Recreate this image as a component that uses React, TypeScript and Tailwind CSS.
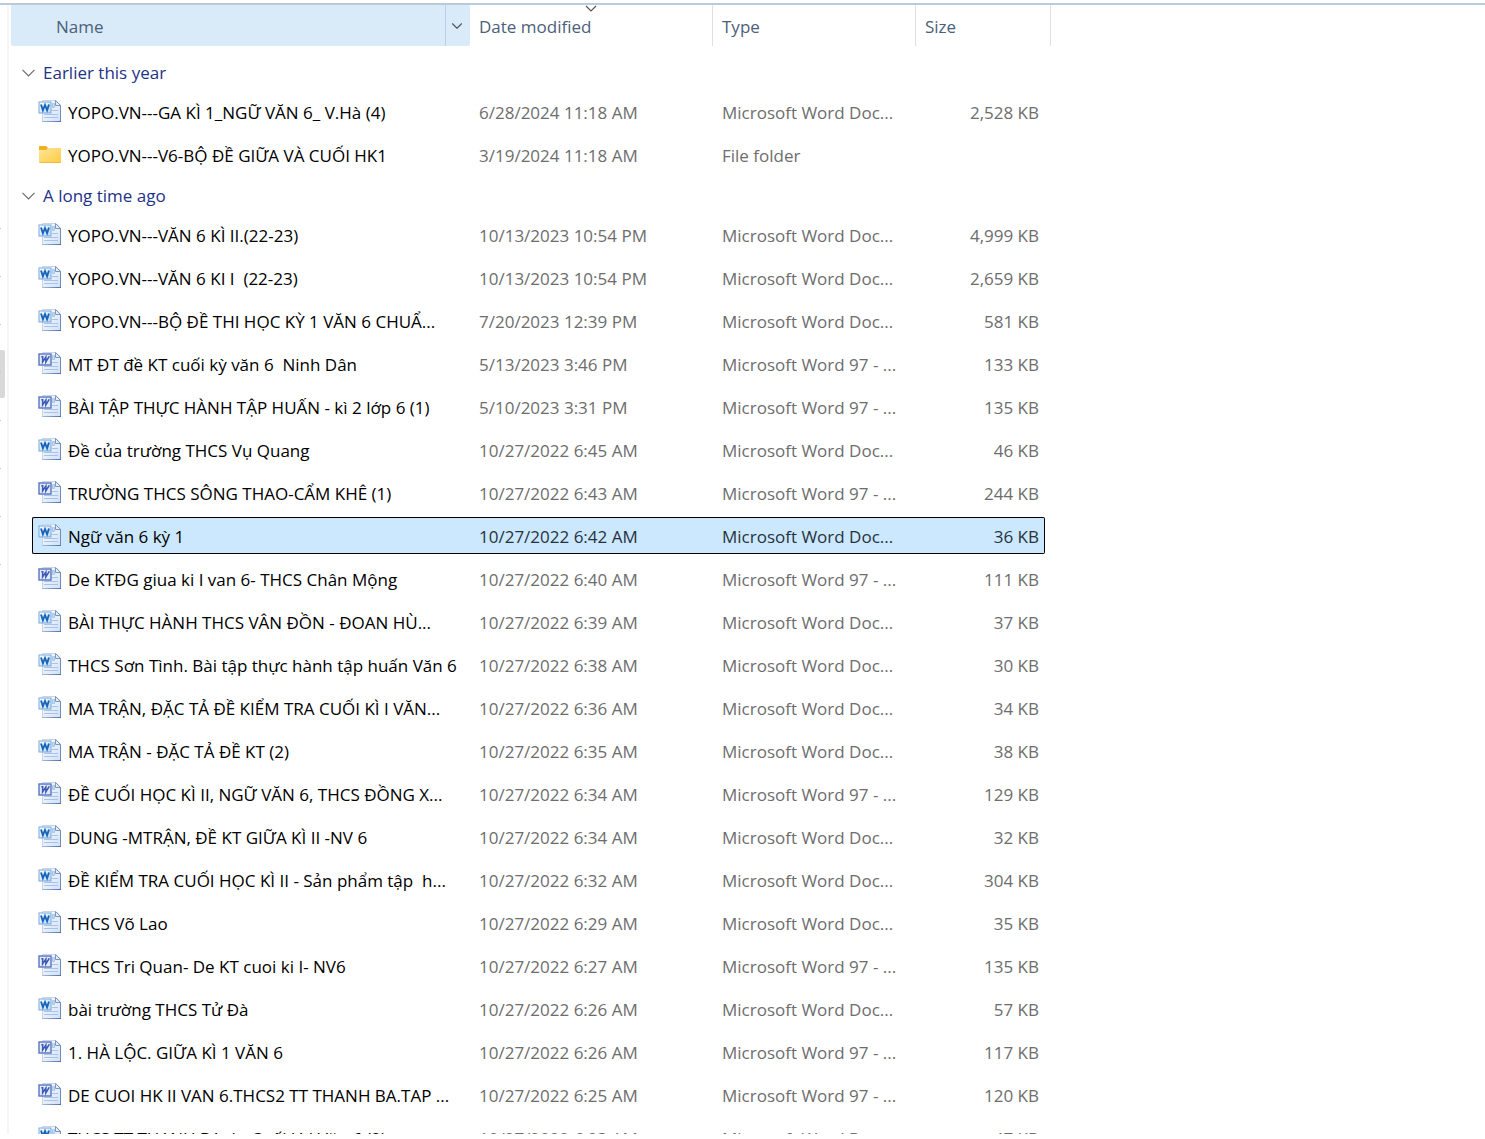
import { ChevronDown } from 'lucide-react'

type Kind = 'docx' | 'doc' | 'folder'

interface FileItem {
  name: string
  date: string
  kind: Kind
  size: string
  selected?: boolean
}

interface Group {
  label: string
  files: FileItem[]
}

const typeLabels: Record<Kind, string> = {
  docx: 'Microsoft Word Doc...',
  doc: 'Microsoft Word 97 - ...',
  folder: 'File folder',
}

const groups: Group[] = [
  {
    label: 'Earlier this year',
    files: [
      { name: 'YOPO.VN---GA KÌ 1_NGỮ VĂN 6_ V.Hà (4)', date: '6/28/2024 11:18 AM', kind: 'docx', size: '2,528 KB' },
      { name: 'YOPO.VN---V6-BỘ ĐỀ GIỮA VÀ CUỐI HK1', date: '3/19/2024 11:18 AM', kind: 'folder', size: '' },
    ],
  },
  {
    label: 'A long time ago',
    files: [
      { name: 'YOPO.VN---VĂN 6 KÌ II.(22-23)', date: '10/13/2023 10:54 PM', kind: 'docx', size: '4,999 KB' },
      { name: 'YOPO.VN---VĂN 6 KI I  (22-23)', date: '10/13/2023 10:54 PM', kind: 'docx', size: '2,659 KB' },
      { name: 'YOPO.VN---BỘ ĐỀ THI HỌC KỲ 1 VĂN 6 CHUẨ...', date: '7/20/2023 12:39 PM', kind: 'docx', size: '581 KB' },
      { name: 'MT ĐT đề KT cuối kỳ văn 6  Ninh Dân', date: '5/13/2023 3:46 PM', kind: 'doc', size: '133 KB' },
      { name: 'BÀI TẬP THỰC HÀNH TẬP HUẤN - kì 2 lớp 6 (1)', date: '5/10/2023 3:31 PM', kind: 'doc', size: '135 KB' },
      { name: 'Đề của trường THCS Vụ Quang', date: '10/27/2022 6:45 AM', kind: 'docx', size: '46 KB' },
      { name: 'TRƯỜNG THCS SÔNG THAO-CẨM KHÊ (1)', date: '10/27/2022 6:43 AM', kind: 'doc', size: '244 KB' },
      { name: 'Ngữ văn 6 kỳ 1', date: '10/27/2022 6:42 AM', kind: 'docx', size: '36 KB', selected: true },
      { name: 'De KTĐG giua ki I van 6- THCS Chân Mộng', date: '10/27/2022 6:40 AM', kind: 'doc', size: '111 KB' },
      { name: 'BÀI THỰC HÀNH THCS VÂN ĐỒN - ĐOAN HÙ...', date: '10/27/2022 6:39 AM', kind: 'docx', size: '37 KB' },
      { name: 'THCS Sơn Tình. Bài tập thực hành tập huấn Văn 6', date: '10/27/2022 6:38 AM', kind: 'docx', size: '30 KB' },
      { name: 'MA TRẬN, ĐẶC TẢ ĐỀ KIỂM TRA CUỐI KÌ I VĂN...', date: '10/27/2022 6:36 AM', kind: 'docx', size: '34 KB' },
      { name: 'MA TRẬN - ĐẶC TẢ ĐỀ KT (2)', date: '10/27/2022 6:35 AM', kind: 'docx', size: '38 KB' },
      { name: 'ĐỀ CUỐI HỌC KÌ II, NGỮ VĂN 6, THCS ĐỒNG X...', date: '10/27/2022 6:34 AM', kind: 'doc', size: '129 KB' },
      { name: 'DUNG -MTRẬN, ĐỀ KT GIỮA KÌ II -NV 6', date: '10/27/2022 6:34 AM', kind: 'docx', size: '32 KB' },
      { name: 'ĐỀ KIỂM TRA CUỐI HỌC KÌ II - Sản phẩm tập  h...', date: '10/27/2022 6:32 AM', kind: 'docx', size: '304 KB' },
      { name: 'THCS Võ Lao', date: '10/27/2022 6:29 AM', kind: 'docx', size: '35 KB' },
      { name: 'THCS Tri Quan- De KT cuoi ki I- NV6', date: '10/27/2022 6:27 AM', kind: 'doc', size: '135 KB' },
      { name: 'bài trường THCS Tử Đà', date: '10/27/2022 6:26 AM', kind: 'docx', size: '57 KB' },
      { name: '1. HÀ LỘC. GIỮA KÌ 1 VĂN 6', date: '10/27/2022 6:26 AM', kind: 'doc', size: '117 KB' },
      { name: 'DE CUOI HK II VAN 6.THCS2 TT THANH BA.TAP ...', date: '10/27/2022 6:25 AM', kind: 'doc', size: '120 KB' },
      { name: 'THCS TT THANH BA- kt Cuối kì I Văn 6 (2)', date: '10/27/2022 6:23 AM', kind: 'docx', size: '47 KB' },
    ],
  },
]

const navItems = [0, 1, 2, 3, 4, 5, 6, 7]

function WordIcon({ legacy }: { legacy: boolean }) {
  return (
    <svg width="24" height="24" viewBox="0 0 24 24" className="shrink-0" aria-hidden="true">
      <defs>
        <linearGradient id="page" x1="0" y1="0" x2="1" y2="1">
          <stop offset="0" stopColor="#ffffff" />
          <stop offset="1" stopColor="#cfe0f8" />
        </linearGradient>
        <linearGradient id="badge" x1="0" y1="0" x2="1" y2="1">
          <stop offset="0" stopColor="#ffffff" />
          <stop offset="1" stopColor="#b9d8f7" />
        </linearGradient>
        <linearGradient id="edge" x1="0" y1="0" x2="1" y2="0">
          <stop offset="0" stopColor="#a9bddb" />
          <stop offset="1" stopColor="#4d6fa8" />
        </linearGradient>
      </defs>
      <path d="M4.500 0.500H18L22.500 5V21.500H4.500Z" fill="url(#page)" stroke="#c9d5e6" />
      <path d="M22.500 5V22" fill="none" stroke="#6d8cbd" />
      <path d="M4 21H23V22H4Z" fill="url(#edge)" />
      <path d="M17.500 0.500V5.500H22.500Z" fill="#e4edf8" stroke="#7d97bd" />
      <path d="M14.500 3.500H16.500V7.500H14.500Z" fill="#c4dbf5" stroke="#a9c6e8" />
      <path d="M14 10.500H20M6 14.500H20M6 17.500H20" stroke="#a9c3e8" />
      <rect
        x="1"
        y="2"
        width="12"
        height="11"
        fill={legacy ? '#e3eaf9' : 'url(#badge)'}
        stroke={legacy ? '#5874c4' : '#79a7dc'}
        strokeWidth={legacy ? 1.4 : 1}
      />
      {legacy ? (
        <path d="M3.300 4.800H5.500M4.700 4.800L4.600 10L7.900 5L7.800 10L11 4.800H11.600" fill="none" stroke="#3d5cb5" strokeWidth="1.500" />
      ) : (
        <path d="M3 4.500L4.900 10.300L7 5L9.100 10.300L11 4.500" fill="none" stroke="#1765bb" strokeWidth="1.900" />
      )}
    </svg>
  )
}

function FolderIcon() {
  return (
    <svg width="24" height="24" viewBox="0 0 24 24" className="shrink-0" aria-hidden="true">
      <defs>
        <linearGradient id="folder" x1="0" y1="0" x2="1" y2="1">
          <stop offset="0" stopColor="#ffe69c" />
          <stop offset="1" stopColor="#ffcb40" />
        </linearGradient>
      </defs>
      <path d="M1 4Q1 3 2 3H8L10 5H22Q23 5 23 6V10H1Z" fill="#efb01f" />
      <path d="M1 7H8L10 5H23V19Q23 20 22 20H2Q1 20 1 19Z" fill="url(#folder)" />
      <path d="M1.500 19.500H22.500" stroke="#eebc3b" />
    </svg>
  )
}

function FileRow({ file }: { file: FileItem }) {
  const cell = file.selected
    ? 'flex h-[37px] items-center border-y border-black bg-[#cce8ff] text-[#26323c]'
    : 'flex h-[37px] items-center border-y border-transparent text-[#6d6d6d]'
  return (
    <tr className="h-[43px]" aria-selected={file.selected}>
      <td className="pt-0.5 pb-1 pl-[21px]">
        <div className={`${cell} gap-1.5 pl-[5px] ${file.selected ? 'rounded-l-xs border-l' : 'border-l'}`}>
          {file.kind === 'folder' ? <FolderIcon /> : <WordIcon legacy={file.kind === 'doc'} />}
          <span className="pt-0.5 whitespace-pre text-black">{file.name}</span>
        </div>
      </td>
      <td className="pt-0.5 pb-1">
        <div className={`${cell} pt-0.5 pl-[9px]`}>{file.date}</div>
      </td>
      <td className="pt-0.5 pb-1">
        <div className={`${cell} pt-0.5 pl-[9px]`}>{typeLabels[file.kind]}</div>
      </td>
      <td className="pt-0.5 pr-1.5 pb-1">
        <div className={`${cell} justify-end pt-0.5 pr-[5px] ${file.selected ? 'rounded-r-xs border-r' : 'border-r'}`}>
          {file.size}
        </div>
      </td>
    </tr>
  )
}

export default function App() {
  return (
    <div className="h-screen overflow-hidden bg-white pt-[3px] pb-[5px] font-['Open_Sans','Noto_Sans',sans-serif] text-[17px] leading-6">
      <div className="flex h-full overflow-hidden border-t-2 border-[#b9cad9]">
        <aside className="w-[9px] shrink-0 border-r-2 border-[#f5f5f5] pt-[201px]">
          {navItems.map((item) => (
            <div key={item} className={item === 3 ? 'h-12 w-[5px] rounded-r-xs bg-[#d9d9d9] pt-[22px]' : 'h-12 pt-[22px]'}>
              <div className="h-px w-px bg-[#c5c5c5]" />
            </div>
          ))}
        </aside>
        <main className="min-w-0 flex-1 overflow-hidden pl-0.5">
          <table className="w-[1040px] table-fixed border-collapse">
            <colgroup>
              <col className="w-[459px]" />
              <col className="w-[243px]" />
              <col className="w-[203px]" />
              <col />
            </colgroup>
            <thead className="text-left text-[#4c607a]">
              <tr className="h-[41px]">
                <th className="p-0 font-normal">
                  <div className="flex h-[41px] items-center rounded-b-xs bg-[#d9ebf9]">
                    <span className="flex-1 pt-0.5 pl-[45px]">Name</span>
                    <button type="button" aria-label="Filter by name" className="flex h-full w-[25px] items-center border-l border-[#b9cfe2] pl-0.5 text-[#555]">
                      <ChevronDown size={18} strokeWidth={1.5} />
                    </button>
                  </div>
                </th>
                <th className="p-0 font-normal" aria-sort="descending">
                  <div className="relative flex h-[41px] items-center border-r border-[#e0e0e0] pt-0.5 pl-[9px]">
                    Date modified
                    <svg width="12" height="7" viewBox="0 0 12 7" className="absolute inset-x-0 top-0 mx-auto" aria-hidden="true">
                      <path d="M1 1L6 6L11 1" fill="none" stroke="#555" strokeWidth="1.200" />
                    </svg>
                  </div>
                </th>
                <th className="p-0 font-normal">
                  <div className="flex h-[41px] items-center border-r border-[#e0e0e0] pt-0.5 pl-[9px]">Type</div>
                </th>
                <th className="p-0 font-normal">
                  <div className="flex h-[41px] items-center border-r border-[#e0e0e0] pt-0.5 pl-[9px]">Size</div>
                </th>
              </tr>
              <tr className="h-2" />
            </thead>
            {groups.map((group) => (
              <tbody key={group.label}>
                <tr className="h-[37px]">
                  <th colSpan={4} className="p-0 text-left font-normal">
                    <button type="button" className="flex items-center gap-2 pl-[11px] text-[#1e3287]">
                      <svg width="13" height="8" viewBox="0 0 13 8" aria-hidden="true">
                        <path d="M0.500 0.800L6.500 6.800L12.500 0.800" fill="none" stroke="#6b6b6b" strokeWidth="1.200" />
                      </svg>
                      {group.label}
                    </button>
                  </th>
                </tr>
                {group.files.map((file) => (
                  <FileRow key={file.name} file={file} />
                ))}
              </tbody>
            ))}
          </table>
        </main>
      </div>
    </div>
  )
}
